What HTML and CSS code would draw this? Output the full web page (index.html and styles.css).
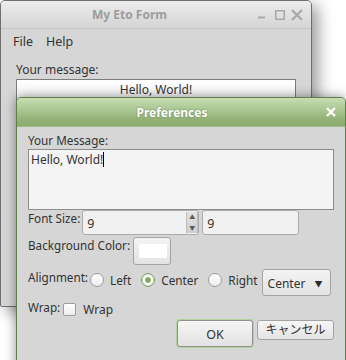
FILE: index.html
```html
<!DOCTYPE html>
<html lang="en">
<head>
    <meta charset="UTF-8">
    <title>My Eto Form</title>
    <link rel="stylesheet" href="styles.css">
</head>
<body>
    <div class="desktop">
        <div class="window main-window">
            <div class="titlebar">
                <span class="title">My Eto Form</span>
                <svg class="wm-buttons" width="48" height="14" viewBox="0 0 48 14">
                    <rect x="2" y="8.5" width="7" height="2" fill="#a8a8a8"/>
                    <rect x="19.75" y="2.75" width="8.5" height="8.5" fill="none" stroke="#a8a8a8" stroke-width="1.5"/>
                    <path d="M36 2 L46 12 M46 2 L36 12" stroke="#a8a8a8" stroke-width="2.2"/>
                </svg>
            </div>
            <div class="menubar">
                <span>File</span>
                <span>Help</span>
            </div>
            <div class="main-body">
                <div class="label">Your message:</div>
                <div class="entry">Hello, World!</div>
            </div>
        </div>

        <div class="window dialog">
            <div class="dialog-title">
                <span class="title">Preferences</span>
                <svg class="close" width="10" height="10" viewBox="0 0 10 10">
                    <path d="M1 1 L9 9 M9 1 L1 9" stroke="#ffffff" stroke-width="2.4"/>
                </svg>
            </div>
            <div class="dialog-body">
                <div class="label">Your Message:</div>
                <div class="textarea">Hello, World!<span class="caret"></span></div>

                <div class="row font-row">
                    <span class="label">Font Size:</span>
                    <div class="spin">
                        <span class="value">9</span>
                        <div class="spin-buttons">
                            <span>&#9650;</span>
                            <span>&#9660;</span>
                        </div>
                    </div>
                    <div class="field">9</div>
                </div>

                <div class="row color-row">
                    <span class="label">Background Color:</span>
                    <div class="color-button"><span class="swatch"></span></div>
                </div>

                <div class="row align-row">
                    <span class="label">Alignment:</span>
                    <div class="radio-item"><span class="radio"></span>Left</div>
                    <div class="radio-item"><span class="radio checked"></span>Center</div>
                    <div class="radio-item last"><span class="radio"></span>Right</div>
                    <div class="dropdown">Center<span class="arrow">&#9660;</span></div>
                </div>

                <div class="row wrap-row">
                    <span class="label">Wrap:</span>
                    <span class="checkbox"></span>
                    <span class="check-text">Wrap</span>
                </div>

                <div class="button-row">
                    <div class="btn btn-ok">OK</div>
                    <div class="btn btn-cancel">キャンセル</div>
                </div>
            </div>
        </div>
    </div>
</body>
</html>
```

FILE: styles.css
```css
* {
    box-sizing: border-box;
}
body {
    margin: 0;
    background-color: #ffffff;
    font-family: "Noto Sans", "Noto Sans CJK JP", sans-serif;
    font-size: 12px;
    color: #333333;
}
.desktop {
    position: relative;
    width: 346px;
    height: 360px;
    overflow: hidden;
}
.window {
    position: absolute;
}
.label {
    line-height: 16px;
    white-space: nowrap;
}

/* main window */
.main-window {
    left: 0;
    top: 0;
    width: 312px;
    height: 307px;
    background-color: #d6d6d6;
    border: 1px solid #6f6f6f;
    border-radius: 5px 5px 2px 2px;
    box-shadow: 6px 5px 16px rgba(0, 0, 0, 0.4);
}
.titlebar {
    display: flex;
    align-items: center;
    height: 28px;
    background: linear-gradient(#ececec, #dedede 60%, #d4d4d4);
    border-bottom: 1px solid #c6c6c6;
    border-radius: 4px 4px 0 0;
}
.titlebar .title {
    flex: 1;
    text-align: center;
    font-weight: bold;
    color: #9c9c9c;
    padding-left: 2px;
}
.wm-buttons {
    margin-right: 7px;
}
.menubar {
    display: flex;
    gap: 13px;
    height: 25px;
    align-items: center;
    padding-left: 12px;
    font-size: 12.5px;
}
.main-body {
    padding: 8px 15px 0;
}
.entry {
    margin-top: 1px;
    width: 280px;
    height: 22px;
    line-height: 19px;
    text-align: center;
    border: 1px solid #7c7c7c;
    background: linear-gradient(#ffffff, #f4f4f4);
}

/* preferences dialog */
.dialog {
    left: 16px;
    top: 97px;
    width: 330px;
    height: 280px;
    background-color: #d6d6d6;
    border: 1px solid #5f7f48;
    border-radius: 5px 5px 0 0;
    box-shadow: 0 0 12px rgba(0, 0, 0, 0.45);
}
.dialog-title {
    display: flex;
    align-items: center;
    height: 29px;
    background: linear-gradient(#c6ddb2, #a9c591 45%, #93b277 75%, #8dac70);
    border-bottom: 1px solid #9fb98a;
    border-radius: 4px 4px 0 0;
}
.dialog-title .title {
    flex: 1;
    text-align: center;
    font-weight: bold;
    color: #ffffff;
    text-shadow: 0 0 2px rgba(60, 90, 40, 0.6);
}
.close {
    margin: 0 9px 0 -1px;
}
.dialog-body {
    padding: 5px 10px 0 11px;
}
.dialog-body .label {
    font-size: 11.7px;
}
.textarea {
    margin-top: 1px;
    width: 306px;
    height: 61px;
    padding: 1px 2px;
    line-height: 17px;
    background-color: #f4f4f4;
    border: 1px solid #8e8e8e;
}
.caret {
    display: inline-block;
    width: 1px;
    height: 15px;
    vertical-align: -3px;
    background-color: #000000;
}
.row {
    display: flex;
    align-items: flex-start;
}
.font-row {
    height: 25px;
}
.font-row .label {
    margin-right: 2px;
}
.spin,
.field {
    height: 25px;
    border: 1px solid #ababab;
    border-radius: 3px;
    background-color: #f1f1f1;
}
.spin {
    display: flex;
    width: 117px;
}
.spin .value,
.field {
    padding: 5px 0 0 4px;
    line-height: 16px;
    font-size: 12.5px;
}
.spin .value {
    flex: 1;
}
.spin-buttons {
    display: flex;
    flex-direction: column;
    justify-content: space-between;
    align-items: center;
    width: 12px;
    margin: 1px 0;
    background: linear-gradient(#e2e2e2, #cfcfcf);
    border-left: 1px solid #bdbdbd;
    border-right: 1px solid #bdbdbd;
    font-size: 6px;
    line-height: 10px;
    color: #5a5a5a;
}
.field {
    width: 97px;
    margin-left: 3px;
}
.color-row {
    height: 28px;
    margin-top: 2px;
}
.color-row .label {
    margin-right: 3px;
}
.color-button {
    display: flex;
    align-items: center;
    width: 38px;
    height: 28px;
    padding-left: 5px;
    border: 1px solid #a3a3a3;
    border-radius: 3px;
    background: linear-gradient(#f3f3f3, #e3e3e3);
}
.swatch {
    width: 28px;
    height: 14px;
    background-color: #ffffff;
}
.align-row {
    height: 27px;
    margin-top: 4px;
}
.radio-item {
    display: flex;
    align-items: center;
    height: 17px;
    margin: 2px 10px 0 0;
    line-height: 16px;
    font-size: 11.8px;
}
.radio-item.last {
    margin-right: 4px;
}
.align-row .label {
    margin-right: 2px;
}
.radio {
    width: 14px;
    height: 14px;
    margin-right: 6px;
    border: 1px solid #9c9c9c;
    border-radius: 50%;
    background: linear-gradient(#ffffff, #ececec);
}
.radio.checked {
    border-color: #7d9d63;
    background: radial-gradient(circle, #7fab5c 0, #7fab5c 2.5px, #ffffff 3.2px, #f2f2f2 100%);
    box-shadow: inset 0 0 0 1px #d4e3c6;
}
.dropdown {
    display: flex;
    justify-content: space-between;
    align-items: center;
    width: 69px;
    height: 27px;
    padding: 2px 7px 0 5px;
    border: 1px solid #a3a3a3;
    border-radius: 3px;
    background: linear-gradient(#f4f4f4, #e2e2e2);
}
.arrow {
    font-size: 8px;
    color: #2e2e2e;
}
.wrap-row {
    height: 18px;
    margin-top: 3px;
    align-items: center;
}
.wrap-row .label {
    align-self: flex-start;
    margin-right: 3px;
}
.checkbox {
    width: 13px;
    height: 13px;
    margin: 3px 7px 0 0;
    border: 1px solid #9c9c9c;
    border-radius: 2px;
    background: linear-gradient(#ffffff, #ededed);
}
.check-text {
    line-height: 16px;
    margin-top: 3px;
}
.button-row {
    display: flex;
    justify-content: flex-end;
    align-items: flex-start;
    margin-top: 3px;
    padding-right: 1px;
}
.btn {
    text-align: center;
    border-radius: 3px;
    font-size: 12.5px;
}
.btn-ok {
    width: 76px;
    height: 27px;
    padding-top: 5px;
    border: 1px solid #8f8f8f;
    box-shadow: 0 0 0 1px #b3d198;
    background: linear-gradient(#f6f6f6, #e2e2e2);
}
.btn-cancel {
    width: 77px;
    height: 20px;
    margin-left: 4px;
    line-height: 17px;
    font-size: 12px;
    border: 1px solid #a3a3a3;
    background: linear-gradient(#f6f6f6, #e4e4e4);
}
```
